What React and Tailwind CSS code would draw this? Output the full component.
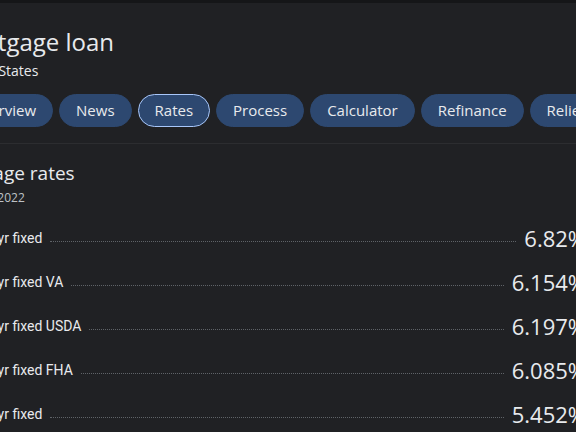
import React from 'react';

const tabs = ['Overview', 'News', 'Rates', 'Process', 'Calculator', 'Refinance', 'Relief'];

const rates = [
  { label: '30-yr fixed', value: '6.82%' },
  { label: '30-yr fixed VA', value: '6.154%' },
  { label: '30-yr fixed USDA', value: '6.197%' },
  { label: '30-yr fixed FHA', value: '6.085%' },
  { label: '15-yr fixed', value: '5.452%' },
];

function App() {
  return (
    <div className="w-[576px] h-[432px] overflow-hidden bg-[#202124] text-[#e8eaed] font-['Open_Sans',sans-serif]">
      <div className="h-[3px] bg-[#151618]" />

      <div className="-ml-[46px] w-[632px]">
        {/* Header */}
        <div className="pt-[23px]">
          <h1 className="text-[24px] leading-[32px] -ml-[2px]">Mortgage loan</h1>
          <p className="mt-[3px] text-[14px] leading-[20px] text-[#e8eaed] -ml-[3px]">United States</p>
        </div>

        {/* Tabs */}
        <div className="mt-[13px] flex gap-[6px] whitespace-nowrap">
          {tabs.map(t => (
            <div
              key={t}
              className={
                t === 'Rates'
                  ? 'h-[33px] px-[16px] flex items-center rounded-full bg-[#2d4870] border border-[#a8c7fa] text-[15px]'
                  : 'h-[33px] px-[16px] flex items-center rounded-full bg-[#2d4870] border border-[#2d4870] text-[15px]'
              }
            >
              {t}
            </div>
          ))}
        </div>

        <div className="mt-[16px] h-px bg-[#2c2d30]" />

        {/* Rates section */}
        <div className="pt-[17px]">
          <h2 className="text-[19px] leading-[24px] -ml-[14px]">Mortgage rates</h2>
          <p className="mt-[5px] text-[12px] leading-[16px] text-[#bdc1c6] -ml-[2px]">Nov 10, 2022</p>
        </div>

        <div className="mt-[10px] pl-[24px] flex flex-col">
          {rates.map(r => (
            <div key={r.label} className="h-[44px] flex items-center gap-[8px]">
              <span className="text-[14px] font-['Roboto',sans-serif] text-[#e8eaed]">{r.label}</span>
              <div className="flex-1 border-b border-dotted border-[#5f6368] translate-y-[3px]" />
              <span className="text-[22px] leading-[28px]">{r.value}</span>
            </div>
          ))}
        </div>
      </div>
    </div>
  );
}

export default App;
